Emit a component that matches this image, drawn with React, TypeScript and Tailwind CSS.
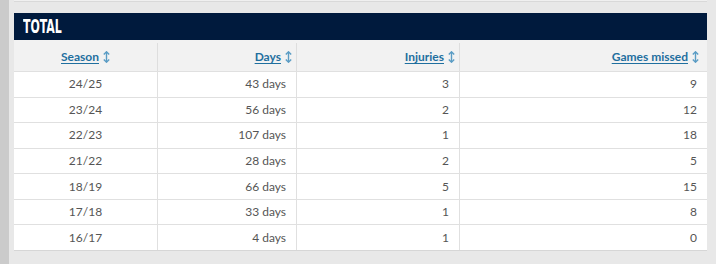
const rows = [
  { season: '24/25', days: '43 days', injuries: 3, missed: 9 },
  { season: '23/24', days: '56 days', injuries: 2, missed: 12 },
  { season: '22/23', days: '107 days', injuries: 1, missed: 18 },
  { season: '21/22', days: '28 days', injuries: 2, missed: 5 },
  { season: '18/19', days: '66 days', injuries: 5, missed: 15 },
  { season: '17/18', days: '33 days', injuries: 1, missed: 8 },
  { season: '16/17', days: '4 days', injuries: 1, missed: 0 },
];

function SortIcon() {
  return (
    <svg width="7" height="12" viewBox="0 0 7 12" className="ml-[4px] inline-block">
      <path d="M3.5 1v10" stroke="#5a9cc4" strokeWidth="1.4" />
      <path d="M0.8 3.6L3.5 0.8 6.2 3.6" stroke="#5a9cc4" strokeWidth="1.4" fill="none" />
      <path d="M0.8 8.4L3.5 11.2 6.2 8.4" stroke="#5a9cc4" strokeWidth="1.4" fill="none" />
    </svg>
  );
}

function HeadLink({ label }: { label: string }) {
  return (
    <span className="inline-flex items-center">
      <a className="font-bold text-[#1f6f9f] underline underline-offset-2 decoration-[#1f6f9f]">{label}</a>
      <SortIcon />
    </span>
  );
}

export default function App() {
  return (
    <div
      className="flex h-[264px] w-[716px] bg-[#e8e8e8]"
      style={{ fontFamily: 'Lato, "Open Sans", sans-serif' }}
    >
      <div className="w-[9px] shrink-0 bg-[#cbcbcb]" />
      <div className="flex w-[698px] flex-col pl-[5px]">
        <div className="h-[2px] border-b border-[#d9d9d9] bg-[#f0f0f0]" />
        <div className="mt-[11px] flex w-[693px] flex-col border-b border-[#d6d6d6] bg-white">
          <div
            className="flex h-[27px] items-center bg-[#001a3d] pl-[9px] text-[19px] font-bold text-white"
            style={{ fontFamily: '"DejaVu Sans Condensed", "DejaVu Sans", sans-serif' }}
          >
            <span className="inline-block origin-left scale-x-[0.64]">TOTAL</span>
          </div>
          <div className="flex h-[31px] items-center bg-[#f2f2f2] pt-[3px] text-[12px]">
            <div className="flex h-full w-[144px] items-center justify-center border-r border-[#dedede]">
              <HeadLink label="Season" />
            </div>
            <div className="flex h-full w-[139px] items-center justify-end border-r border-[#dedede] pr-[4px]">
              <HeadLink label="Days" />
            </div>
            <div className="flex h-full w-[163px] items-center justify-end border-r border-[#dedede] pr-[4px]">
              <HeadLink label="Injuries" />
            </div>
            <div className="flex h-full flex-1 items-center justify-end pr-[8px]">
              <HeadLink label="Games missed" />
            </div>
          </div>
          <div className="flex h-[179px] flex-col text-[12px] text-[#555555]">
            {rows.map((r) => (
              <div key={r.season} className="flex flex-1 border-t border-[#e0e0e0]">
                <div className="flex w-[144px] items-center justify-center border-r border-[#e0e0e0]">{r.season}</div>
                <div className="flex w-[139px] items-center justify-end border-r border-[#e0e0e0] pr-[10px]">{r.days}</div>
                <div className="flex w-[163px] items-center justify-end border-r border-[#e0e0e0] pr-[10px]">{r.injuries}</div>
                <div className="flex flex-1 items-center justify-end pr-[10px]">{r.missed}</div>
              </div>
            ))}
          </div>
        </div>
      </div>
    </div>
  );
}
